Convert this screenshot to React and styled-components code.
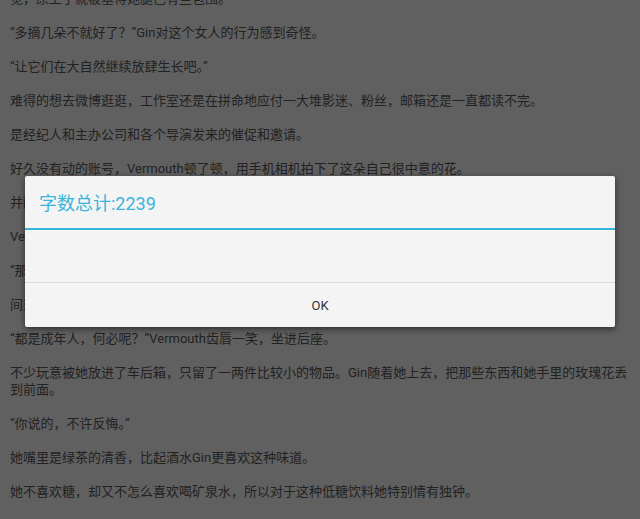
import React from "react";
import styled, { createGlobalStyle } from "styled-components";

const Global = createGlobalStyle`
  html, body { margin: 0; padding: 0; }
  body { background: #efefef; font-family: Roboto, "Noto Sans CJK SC", sans-serif; }
`;

const Page = styled.div`
  position: relative;
  width: 640px;
  height: 519px;
  overflow: hidden;
  background: #efefef;
`;

const Article = styled.div`
  margin-top: -10px;
  padding: 0 10px;
  display: flex;
  flex-direction: column;
  gap: 17px;
`;

const Para = styled.p`
  margin: 0;
  font-size: 13px;
  line-height: 17px;
  color: #555;
`;

const Overlay = styled.div`
  position: absolute;
  inset: 0;
  background: rgba(0, 0, 0, 0.6);
  display: flex;
  flex-direction: column;
  align-items: center;
  padding-top: 176px;
  box-sizing: border-box;
`;

const Dialog = styled.div`
  width: 590px;
  background: #f4f4f4;
  border-radius: 2px;
  box-shadow: 0 2px 6px rgba(0, 0, 0, 0.55);
  display: flex;
  flex-direction: column;
`;

const Title = styled.div`
  height: 52px;
  padding-left: 14px;
  display: flex;
  align-items: center;
  font-size: 18px;
  color: #3ab4dc;
  border-bottom: 2px solid #38b4dc;
`;

const Body = styled.div`
  height: 52px;
  border-bottom: 1px solid #dadada;
`;

const Button = styled.button`
  height: 44px;
  border: none;
  background: transparent;
  font-family: Roboto, "Noto Sans CJK SC", sans-serif;
  font-size: 13px;
  color: #333;
  padding: 0;
  cursor: pointer;
`;

const paragraphs = [
  "觉，原上了就被塞得她腿已有些包围。",
  "“多摘几朵不就好了？”Gin对这个女人的行为感到奇怪。",
  "“让它们在大自然继续放肆生长吧。”",
  "难得的想去微博逛逛，工作室还是在拼命地应付一大堆影迷、粉丝，邮箱还是一直都读不完。",
  "是经纪人和主办公司和各个导演发来的催促和邀请。",
  "好久没有动的账号，Vermouth顿了顿，用手机相机拍下了这朵自己很中意的花。",
  "并配上了一句简短的话，发了出去。",
  "Vermouth收起手机，抱着花走回了车边。",
  "“那些东西放后面吧，前面放不下。”",
  "间或有风吹过，带着淡淡的花香。",
  "“都是成年人，何必呢？”Vermouth齿唇一笑，坐进后座。",
  "不少玩意被她放进了车后箱，只留了一两件比较小的物品。Gin随着她上去，把那些东西和她手里的玫瑰花丢到前面。",
  "“你说的，不许反悔。”",
  "她嘴里是绿茶的清香，比起酒水Gin更喜欢这种味道。",
  "她不喜欢糖，却又不怎么喜欢喝矿泉水，所以对于这种低糖饮料她特别情有独钟。",
  "“那以后，你就不许再喝酒了。”",
];

export default function App() {
  return (
    <>
      <Global />
      <Page>
        <Article>
          {paragraphs.map((t, i) => (
            <Para key={i}>{t}</Para>
          ))}
        </Article>
        <Overlay>
          <Dialog>
            <Title>字数总计:2239</Title>
            <Body />
            <Button>OK</Button>
          </Dialog>
        </Overlay>
      </Page>
    </>
  );
}
